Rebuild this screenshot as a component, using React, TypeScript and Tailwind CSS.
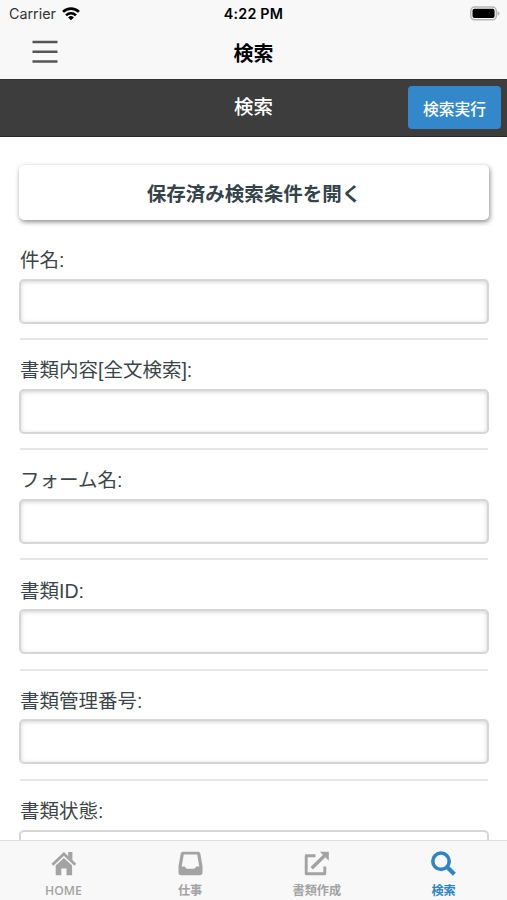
import type { ReactNode } from 'react';

const fields = ['件名:', '書類内容[全文検索]:', 'フォーム名:', '書類ID:', '書類管理番号:', '書類状態:'];

function Tab({ label, active, children }: { label: string; active?: boolean; children: ReactNode }) {
  return (
    <div className={`flex flex-1 flex-col items-center pt-[10px] ${active ? 'text-[#2f84c8]' : 'text-[#a3a3a3]'}`}>
      <svg width="25" height="25" viewBox="0 0 25 25" fill="none" stroke="currentColor">
        {children}
      </svg>
      <span className="mt-[7px] font-['Open_Sans','Noto_Sans_CJK_JP',sans-serif] text-[12.2px] leading-[16px] font-semibold">{label}</span>
    </div>
  );
}

export default function App() {
  return (
    <div className="flex h-[900px] w-[507px] flex-col overflow-hidden bg-white font-['Inter','Noto_Sans_CJK_JP',sans-serif] text-[#3b4649]">
      <header className="h-[79px] shrink-0 bg-[#f8f8f8] text-black">
        <div className="grid h-[27px] grid-cols-3 items-center pr-[7px] pl-[9px]">
          <div className="flex items-center gap-[6px] text-[14.3px] text-[#333]">
            <span>Carrier</span>
            <svg width="18" height="14" viewBox="0 0 19 15" fill="none" stroke="black" strokeWidth="2.8">
              <path d="M1 5.3a12 12 0 0 1 17 0" />
              <path d="M4.2 8.9a7.5 7.5 0 0 1 10.6 0" />
              <path d="M9.5 14.2 6.4 11.2a4.4 4.4 0 0 1 6.2 0Z" fill="black" stroke="none" />
            </svg>
          </div>
          <span className="-ml-[2px] text-center text-[14.3px] font-semibold tracking-[0.2px]">4:22 PM</span>
          <svg className="justify-self-end" width="30" height="15" viewBox="0 0 31 15">
            <rect x="0.8" y="0.8" width="26.4" height="13.2" rx="4" fill="#f8f8f8" stroke="#b5b5b5" strokeWidth="1.5" />
            <rect x="2.6" y="2.6" width="22.8" height="9.6" rx="2" />
            <path d="M28.5 5.2q2 .6 2 2.3t-2 2.3Z" fill="#b5b5b5" />
          </svg>
        </div>
        <div className="grid h-[50px] grid-cols-3 items-center">
          <svg className="ml-[32px]" width="26" height="24" viewBox="0 0 26 24" stroke="#555" strokeWidth="2.6">
            <path d="M.5 2h25M.5 11.8h25M.5 21.5h25" />
          </svg>
          <h1 className="mt-[3px] text-center text-[20px] leading-[28px] font-semibold">検索</h1>
        </div>
      </header>
      <div className="grid h-[58px] shrink-0 grid-cols-3 items-center border-t border-b border-t-[#333] border-b-[#292929] bg-[#3d3d3d] pr-[6px] pl-[6px] text-white">
        <h2 className="col-start-2 text-center text-[19.5px] font-medium">検索</h2>
        <button className="-mt-px h-[43px] w-[93px] justify-self-end rounded-[4px] bg-[#3388cc] pt-[5px] text-[15.8px] font-medium">検索実行</button>
      </div>
      <main className="min-h-0 flex-1 overflow-hidden px-[19px] pt-[28px]">
        <button className="block h-[55px] w-[470px] rounded-[5px] bg-white pt-[5px] text-[19.5px] font-semibold text-[#35434a] shadow-[1px_2px_5px_rgba(0,0,0,0.45)]">
          保存済み検索条件を開く
        </button>
        <div className="mt-[9px] font-['Liberation_Sans','Noto_Sans_CJK_JP',sans-serif]">
          {fields.map((label, i) => (
            <label key={label} className="block h-[110.2px]">
              <span className="block h-[49.5px] pt-[17px] pl-[1px] text-[19.5px] leading-[28px]">{label}</span>
              <input
                className={`block h-[45px] w-[470px] rounded-[5px] border-2 border-[#d6d6d6] bg-white ${i === 5 ? 'mt-[1px]' : 'shadow-[inset_0_1px_4px_rgba(0,0,0,0.18)]'}`}
              />
              <span className="mt-[14.5px] ml-[1px] block h-[2px] bg-[#e6e6e6]" />
            </label>
          ))}
        </div>
      </main>
      <nav className="z-10 flex h-[60px] shrink-0 border-t border-[#dedede] bg-[#f8f8f8]">
        <Tab label="HOME">
          <path d="M1.4 13.7 12.9 2.9l11.5 10.8" strokeWidth="2.7" />
          <path d="M17.2 1h4.2v8.5l-4.2-3.9Z" fill="currentColor" stroke="none" />
          <path d="m12.9 7 8.2 7.5v9.7h-5.6v-6.7h-5.2v6.7H4.7v-9.7Z" fill="currentColor" stroke="none" />
        </Tab>
        <Tab label="仕事">
          <path
            fillRule="evenodd"
            d="M4.8.8h15.4q1.7 0 2.1 1.8l2.2 12.7v6.2q0 2.7-2.7 2.7H3.2q-2.7 0-2.7-2.7v-6.2L2.7 2.6Q3.1.8 4.8.8ZM5.8 3.4 3.7 15.4h2.8l2.2 2.4h7.6l2.2-2.4h2.8L19.2 3.4Z"
            fill="currentColor"
            stroke="none"
          />
        </Tab>
        <Tab label="書類作成">
          <path d="M11.5 4.7H2.2v18h18.6v-7.2" strokeWidth="2.9" strokeLinejoin="round" />
          <path d="M7.7 17.2 20.5 4.7" strokeWidth="3.5" />
          <path d="M15.8.8h9v9Z" fill="currentColor" stroke="none" />
        </Tab>
        <Tab label="検索" active>
          <circle cx="10" cy="10.2" r="8.2" strokeWidth="3.6" />
          <path d="m15.8 15.8 7.6 7.4" strokeWidth="4.2" />
        </Tab>
      </nav>
    </div>
  );
}
